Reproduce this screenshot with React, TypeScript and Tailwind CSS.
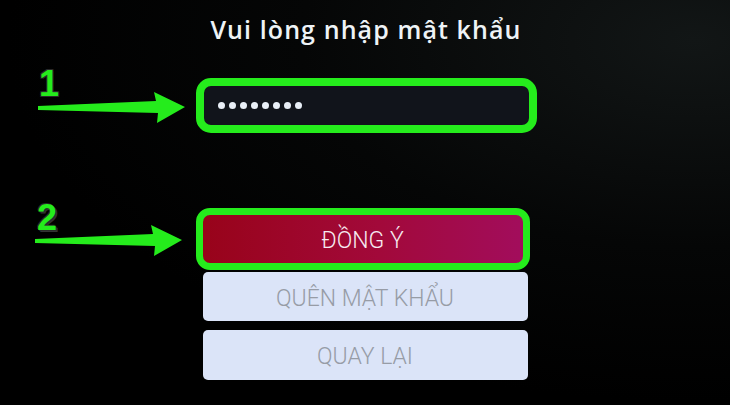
import React from 'react';

const GREEN = '#25ec1c';

const Arrow: React.FC<{ className: string }> = ({ className }) => (
  <svg className={className} width="150" height="40" viewBox="0 0 150 40" fill="none">
    <path d="M0 15 L118 10 L116 1 L147 16 L119 32 L120 22 L0 19 Z" fill={GREEN} />
  </svg>
);

const App: React.FC = () => {
  const dots = [0, 1, 2, 3, 4, 5, 6, 7];

  return (
    <div className="relative w-[730px] h-[405px] overflow-hidden bg-black bg-[radial-gradient(ellipse_at_95%_10%,#121616_0%,#050606_40%,#000_70%)]">
      <div className="flex flex-col items-center pt-[13px]">
        {/* Title */}
        <h1 className="ml-[2px] text-[25px] leading-[32px] tracking-[1.1px] font-semibold text-[#eef3f6] font-['Open_Sans',sans-serif]">
          Vui lòng nhập mật khẩu
        </h1>

        {/* Password field, highlighted */}
        <div className="mt-[33px] ml-[2px] w-[341px] h-[55px] rounded-[15px] border-[8px] border-[#25ec1c] bg-[#11141b] flex items-center pl-[14px] gap-[4px]">
          {dots.map((d) => (
            <span key={d} className="w-[7px] h-[7px] rounded-full bg-[#e8eef6]" />
          ))}
        </div>

        {/* Buttons */}
        <div className="mt-[82px] flex flex-col items-center gap-[9px] font-['Roboto',sans-serif] font-light text-[23px]">
          <div className="relative w-[325px] flex flex-col items-start">
            <div className="w-[320px] h-[48px] rounded-[5px] bg-[linear-gradient(90deg,#98031a_0%,#a2093a_55%,#a20d5c_100%)] flex items-center justify-center text-[#f6eaf0] pt-[5px]">
              ĐỒNG Ý
            </div>
            <div className="absolute -left-[7px] -top-[7px] w-[334px] h-[62px] rounded-[14px] border-[7px] border-[#25ec1c]" />
          </div>
          <button className="w-[325px] h-[49px] rounded-[5px] bg-[#dbe4f8] text-[#979ca6] flex items-center justify-center pt-[5px]">
            QUÊN MẬT KHẨU
          </button>
          <button className="w-[325px] h-[50px] rounded-[5px] bg-[#dbe4f8] text-[#979ca6] flex items-center justify-center pt-[5px]">
            QUAY LẠI
          </button>
        </div>
      </div>

      {/* Step annotations */}
      <span className="absolute left-[39px] top-[64px] text-[36px] leading-[40px] font-bold text-[#25ec1c] font-['Liberation_Sans',sans-serif] [text-shadow:1px_1px_0_#2a2a2a,-1px_-1px_0_#2a2a2a,1px_-1px_0_#2a2a2a,-1px_1px_0_#2a2a2a]">
        1
      </span>
      <Arrow className="absolute left-[38px] top-[91px]" />

      <span className="absolute left-[37px] top-[198px] text-[36px] leading-[40px] font-bold text-[#25ec1c] font-['Liberation_Sans',sans-serif] [text-shadow:1px_1px_0_#2a2a2a,-1px_-1px_0_#2a2a2a,2px_2px_0_#333]">
        2
      </span>
      <Arrow className="absolute left-[35px] top-[224px]" />
    </div>
  );
};

export default App;
